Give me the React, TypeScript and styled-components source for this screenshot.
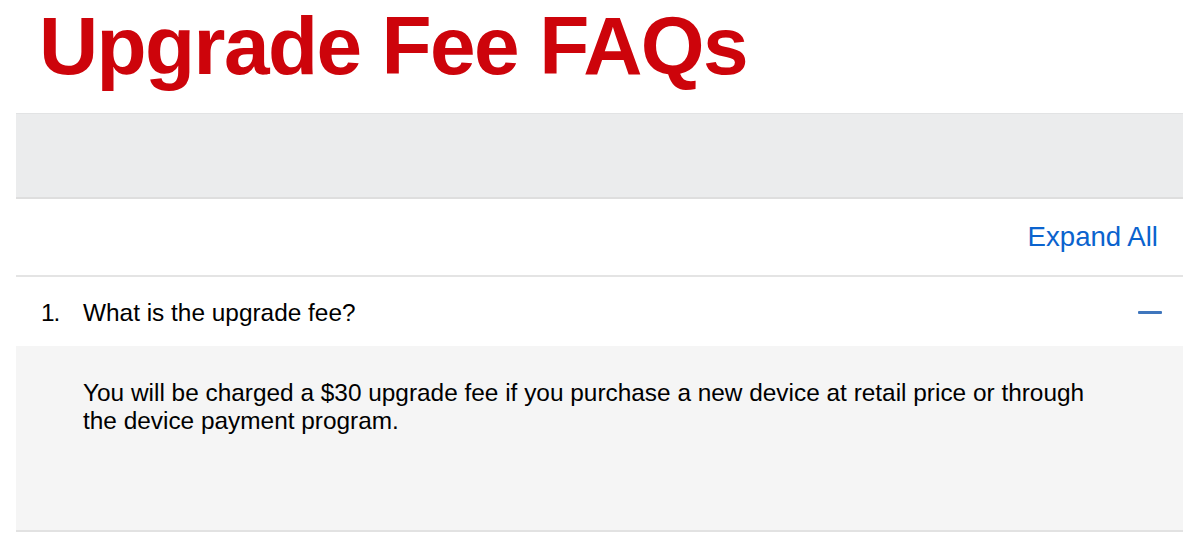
import React from "react";
import styled, { createGlobalStyle } from "styled-components";

const Global = createGlobalStyle`
  html, body { margin: 0; padding: 0; background: #ffffff; }
  body { font-family: "Liberation Sans", Arial, Helvetica, sans-serif; color: #000; }
`;

const Page = styled.div`
  padding: 0 17px 0 16px;
  width: 1167px;
`;

const Title = styled.h1`
  margin: 0 0 26px 0;
  padding: 5px 0 0 23px;
  font-size: 82px;
  line-height: 82px;
  font-weight: 700;
  letter-spacing: -1.6px;
  color: #cd040b;
`;

const Band = styled.div`
  height: 83px;
  background: #ebeced;
  border-top: 1px solid #e2e3e4;
  border-bottom: 2px solid #dedede;
`;

const ToolRow = styled.div`
  display: flex;
  justify-content: flex-end;
  align-items: center;
  height: 76px;
  padding-right: 25px;
  border-bottom: 2px solid #e4e4e4;
`;

const ExpandLink = styled.a`
  font-size: 27.6px;
  color: #0b63ce;
  text-decoration: none;
  cursor: pointer;
`;

const QuestionRow = styled.div`
  display: flex;
  align-items: center;
  height: 69px;
  padding: 2px 21px 0 25px;
  box-sizing: border-box;
`;

const Num = styled.span`
  width: 42px;
  font-size: 24.4px;
  letter-spacing: -1px;
`;

const QuestionText = styled.span`
  flex: 1;
  font-size: 24.4px;
`;

const Minus = styled.span`
  width: 24px;
  height: 3px;
  background: #3f76bd;
  border-radius: 1px;
`;

const Answer = styled.div`
  height: 186px;
  box-sizing: border-box;
  background: #f5f5f5;
  padding: 33px 80px 0 67px;
  border-bottom: 2px solid #e2e2e2;
  font-size: 24.4px;
  line-height: 28px;
`;

export default function App() {
  return (
    <>
      <Global />
      <Page>
        <Title>Upgrade Fee FAQs</Title>
        <Band />
        <ToolRow>
          <ExpandLink>Expand All</ExpandLink>
        </ToolRow>
        <QuestionRow>
          <Num>1.</Num>
          <QuestionText>What is the upgrade fee?</QuestionText>
          <Minus />
        </QuestionRow>
        <Answer>
          You will be charged a $30 upgrade fee if you purchase a new device at retail price or through the device payment program.
        </Answer>
      </Page>
    </>
  );
}
